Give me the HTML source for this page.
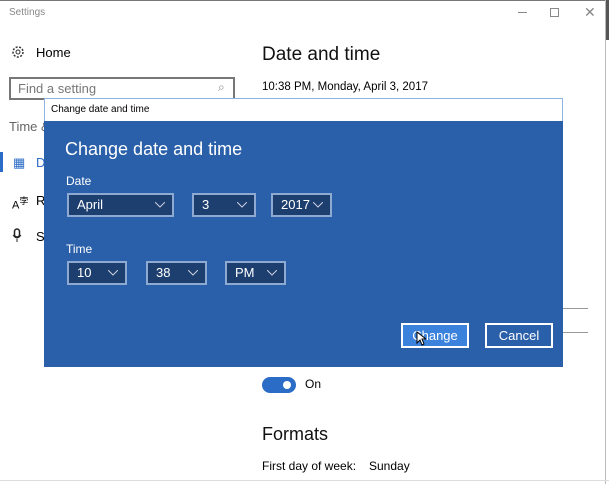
<!DOCTYPE html><html><head><style>
*{margin:0;padding:0;box-sizing:border-box}
body{width:609px;height:484px;background:#fff;font-family:"Liberation Sans",sans-serif;position:relative;overflow:hidden;color:#000}
.a{position:absolute;white-space:nowrap}
.dd{position:absolute;height:24px;background:#1d3f6f;border:2px solid #8eaad2;color:#fff;font-size:13px;line-height:20px;padding-left:8px}
.dd svg{position:absolute;right:7px;top:7px}
.btn{position:absolute;height:25px;border:2px solid #fff;color:#fff;font-size:13px;line-height:21px;text-align:center}
</style></head><body>
<div class="a" style="left:0;top:0;width:609px;height:1px;background:#777"></div>
<div class="a" style="left:605px;top:0;width:1px;height:484px;background:#bbb"></div>
<div class="a" style="left:606px;top:0;width:3px;height:40px;background:#555"></div>
<div class="a" style="left:0;top:480px;width:609px;height:1px;background:#ddd"></div>
<div class="a" style="left:9px;top:7px;font-size:10px;color:#888">Settings</div>
<div class="a" style="left:518px;top:12px;width:9px;height:1px;background:#888"></div>
<div class="a" style="left:550px;top:8px;width:9px;height:9px;border:1px solid #888"></div>
<div class="a" style="left:584px;top:4px;font-size:14px;color:#888">✕</div>
<svg class="a" style="left:11px;top:45px" width="14" height="14" viewBox="0 0 14 14"><circle cx="7" cy="7" r="5" fill="none" stroke="#333" stroke-width="1.5" stroke-dasharray="2 1.5"/><circle cx="7" cy="7" r="2" fill="none" stroke="#333"/></svg>
<div class="a" style="left:36px;top:45px;font-size:13px">Home</div>
<div class="a" style="left:9px;top:77px;width:226px;height:23px;border:2px solid #777"></div>
<div class="a" style="left:18px;top:81px;font-size:13px;color:#777">Find a setting</div>
<div class="a" style="left:218px;top:80px;font-size:12px;color:#888">⌕</div>
<div class="a" style="left:9px;top:119px;font-size:13px;color:#666">Time &amp;</div>
<div class="a" style="left:0;top:152px;width:3px;height:20px;background:#2a6cc6"></div>
<div class="a" style="left:13px;top:155px;font-size:13px;color:#2a6cc6">▦</div>
<div class="a" style="left:36px;top:155px;font-size:13px;color:#2a6cc6">D</div>
<div class="a" style="left:12px;top:193px;font-size:11px">A<sup>孛</sup></div>
<div class="a" style="left:36px;top:193px;font-size:13px">R</div>
<svg class="a" style="left:12px;top:228px" width="10" height="15"><rect x="2.5" y="1" width="5" height="8" rx="2.5" fill="none" stroke="#222" stroke-width="1.5"/><path d="M1 7Q5 13 9 7M5 11V14" stroke="#222" fill="none"/></svg>
<div class="a" style="left:36px;top:229px;font-size:13px">S</div>
<div class="a" style="left:262px;top:44px;font-size:19px;color:#111">Date and time</div>
<div class="a" style="left:262px;top:81px;font-size:11.5px">10:38 PM, Monday, April 3, 2017</div>
<div class="a" style="left:562px;top:308px;width:26px;height:1px;background:#999"></div>
<div class="a" style="left:562px;top:332px;width:26px;height:1px;background:#999"></div>
<div class="a" style="left:262px;top:377px;width:34px;height:16px;border-radius:8px;background:#2a6cc6"></div>
<div class="a" style="left:283px;top:381px;width:8px;height:8px;border-radius:4px;background:#fff"></div>
<div class="a" style="left:305px;top:377px;font-size:12px">On</div>
<div class="a" style="left:262px;top:424px;font-size:18px;color:#111">Formats</div>
<div class="a" style="left:262px;top:459px;font-size:12px">First day of week:</div>
<div class="a" style="left:369px;top:459px;font-size:12px">Sunday</div>
<div class="a" style="left:44px;top:98px;width:519px;height:24px;background:#fff;border:1px solid #8fb3e6;border-bottom:none"></div>
<div class="a" style="left:51px;top:104px;font-size:10px">Change date and time</div>
<div class="a" style="left:44px;top:121px;width:519px;height:246px;background:#2a5fa9"></div>
<div class="a" style="left:65px;top:139px;font-size:18px;color:#fff">Change date and time</div>
<div class="a" style="left:66px;top:174px;font-size:12px;color:#fff">Date</div>
<div class="dd" style="left:67px;top:193px;width:107px">April<svg width="10" height="6"><path d="M0 0L5 5L10 0" stroke="#ccd" fill="none"/></svg></div>
<div class="dd" style="left:192px;top:193px;width:64px">3<svg width="10" height="6"><path d="M0 0L5 5L10 0" stroke="#ccd" fill="none"/></svg></div>
<div class="dd" style="left:271px;top:193px;width:61px">2017<svg width="10" height="6"><path d="M0 0L5 5L10 0" stroke="#ccd" fill="none"/></svg></div>
<div class="a" style="left:66px;top:242px;font-size:12px;color:#fff">Time</div>
<div class="dd" style="left:67px;top:261px;width:60px">10<svg width="10" height="6"><path d="M0 0L5 5L10 0" stroke="#ccd" fill="none"/></svg></div>
<div class="dd" style="left:146px;top:261px;width:61px">38<svg width="10" height="6"><path d="M0 0L5 5L10 0" stroke="#ccd" fill="none"/></svg></div>
<div class="dd" style="left:225px;top:261px;width:61px">PM<svg width="10" height="6"><path d="M0 0L5 5L10 0" stroke="#ccd" fill="none"/></svg></div>
<div class="btn" style="left:401px;top:323px;width:68px;background:#3b82dc">Change</div>
<div class="btn" style="left:485px;top:323px;width:68px;background:#2a5fa9">Cancel</div>
<svg class="a" style="left:416px;top:331px" width="10" height="15"><path d="M1 1L1 12L4 9L6 14L8 13L6 8L10 8Z" fill="#fff" stroke="#000" stroke-width="1"/></svg>
</body></html>
